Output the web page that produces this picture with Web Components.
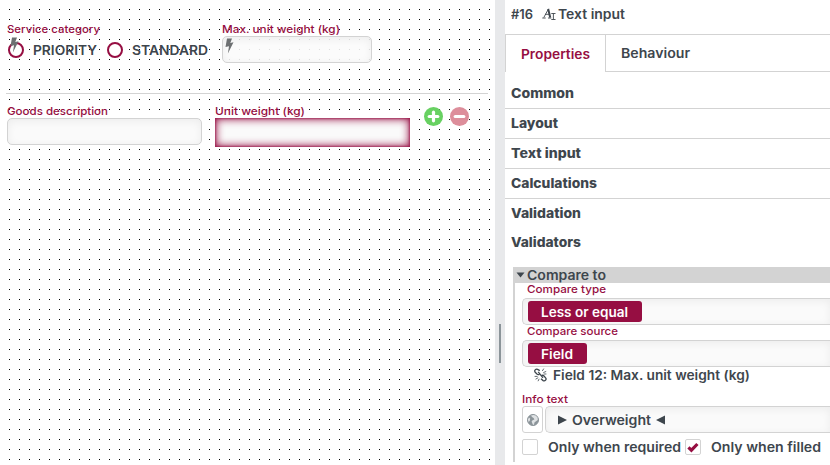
<!DOCTYPE html>
<html lang="en">
<head>
<meta charset="utf-8">
<title>Form designer</title>
<style>
body {
  margin: 0;
  font-family: Inter, "Open Sans", sans-serif;
  color: #3e464d;
}
</style>
</head>
<body>
<form-designer></form-designer>

<script>
const define = (name, html, setup) => {
  const template = document.createElement('template');
  template.innerHTML = html.trim();
  customElements.define(name, class extends HTMLElement {
    constructor() {
      super();
      this.attachShadow({ mode: 'open' });
      this.shadowRoot.appendChild(template.content.cloneNode(true));
    }
    connectedCallback() {
      if (setup) setup(this, this.shadowRoot);
    }
  });
};

// One line of text, widened to the width given in "w"
define('fit-text', `
<style>
:host { display: block; flex: none; white-space: nowrap; font-size: 13px; font-weight: 600; line-height: 16px; }
:host([kind=label]) { font-size: 11px; font-weight: 500; line-height: 14px; color: #960e42; }
:host([kind=title]) { font-weight: 800; font-size: 13px; }
span { display: inline-block; vertical-align: top; transform-origin: 0 0; }
</style>
<span><slot></slot></span>
`, (el, root) => {
  const w = Number(el.getAttribute('w'));
  const span = root.querySelector('span');
  span.style.transform = 'scaleX(' + w / span.getBoundingClientRect().width + ')';
  el.style.width = w + 'px';
});

define('bolt-icon', `
<style>
:host { display: block; width: 9px; height: 16px; }
svg { display: block; }
</style>
<svg width="9" height="16" viewBox="0 0 9 16"><path d="M2 .5h5L5.3 5l3.2-.7L2.9 15.5 4 8.2.5 9z" fill="#6d7072"/></svg>
`);

define('text-box', `
<style>
:host {
  display: flex; align-items: center; box-sizing: border-box; height: 27px; position: relative;
  border: 1px solid #d3d3d3; border-radius: 5px;
  background: #fafafa; box-shadow: inset 0 2px 8px rgba(0,0,0,.06);
}
:host([computed]) { background: rgba(250,250,250,.88); }
:host([open]) { height: 28px; border-right: 0; border-radius: 5px 0 0 5px; }
:host([selected]) {
  height: 29px; border: 0; border-radius: 0;
  box-shadow: inset 0 0 9px 1px #960e42, inset 0 0 2px 1px rgba(150,14,66,.6);
}
</style>
<slot></slot>
`);

define('radio-option', `
<style>
:host { display: flex; align-items: center; gap: 9px; }
i { box-sizing: border-box; width: 16px; height: 16px; border: 2px solid #960e42; border-radius: 50%; background: #fff; }
</style>
<i></i><slot></slot>
`);

define('round-button', `
<style>
:host { display: block; width: 19px; height: 19px; }
svg { display: block; }
circle { fill: #68d162; }
:host([remove]) circle { fill: #dd8e9b; }
:host([remove]) .v { display: none; }
</style>
<svg width="19" height="19" viewBox="0 0 19 19">
  <circle cx="9.5" cy="9.5" r="9.5"/>
  <path d="M5.2 9.5h8.6" stroke="#fff" stroke-width="3.2" stroke-linecap="round"/>
  <path class="v" d="M9.5 5.2v8.6" stroke="#fff" stroke-width="3.2" stroke-linecap="round"/>
</svg>
`);

define('form-canvas', `
<style>
:host {
  display: block; box-sizing: border-box; width: 495px; height: 465px; padding: 22px 6px 0;
  background: #fff;
  position: relative;
}
.grid { position: absolute; inset: 0 5px 0 0; }
.row { display: flex; position: relative; padding-left: 1px; }
.first { height: 71px; border-bottom: 1px solid #d3d3d3; width: 481px; }
.service { width: 215px; }
.radios { display: flex; padding: 6px 0 0 1px; }
.radios radio-option + radio-option { margin-left: 10px; }
.mark { position: absolute; left: 4px; top: 15px; }
.second { padding-top: 10px; }
.goods { width: 208px; }
.max text-box { width: 150px; }
.goods text-box { width: 195px; }
.unit text-box { width: 195px; }
.buttons { display: flex; gap: 7px; margin: 3px 0 0 14px; }
</style>
<svg class="grid" width="490" height="465">
  <pattern id="dots" width="10" height="10" patternUnits="userSpaceOnUse"><rect x="9" y="9" width="1" height="1" fill="#000"/></pattern>
  <rect width="490" height="465" fill="url(#dots)"/>
</svg>
<div class="row first">
  <div class="service">
    <fit-text kind="label" w="93">Service category</fit-text>
    <div class="radios">
      <radio-option><fit-text w="64">PRIORITY</fit-text></radio-option>
      <radio-option><fit-text w="76">STANDARD</fit-text></radio-option>
    </div>
    <bolt-icon class="mark"></bolt-icon>
  </div>
  <div class="max">
    <fit-text kind="label" w="118">Max. unit weight (kg)</fit-text>
    <text-box computed><bolt-icon style="margin:-8px 0 0 2px"></bolt-icon></text-box>
  </div>
</div>
<div class="row second">
  <div class="goods">
    <fit-text kind="label" w="101">Goods description</fit-text>
    <text-box></text-box>
  </div>
  <div class="unit">
    <fit-text kind="label" w="90">Unit weight (kg)</fit-text>
    <text-box selected></text-box>
  </div>
  <div class="buttons">
    <round-button></round-button>
    <round-button remove></round-button>
  </div>
</div>
`);

define('split-bar', `
<style>
:host { display: flex; align-items: center; width: 10px; height: 465px; background: #e8e9eb; }
i { width: 2px; height: 39px; margin: 221px 0 0 4px; background: #8b9499; }
</style>
<i></i>
`);

define('tag-chip', `
<style>
:host { display: flex; align-items: center; height: 21px; margin: 0 0 1px 5px; padding: 1px 14px 0 13px; box-sizing: border-box; border-radius: 3px; background: #960e42; color: #fff; }
</style>
<slot></slot>
`);

define('check-option', `
<style>
:host { display: flex; align-items: center; gap: 10px; }
i { display: block; box-sizing: border-box; width: 16px; height: 16px; border: 1px solid #d3d3d3; border-radius: 2px; background: #fff; }
svg { display: none; }
:host([checked]) svg { display: block; }
</style>
<i><svg width="14" height="14" viewBox="0 0 14 14"><path d="M2.4 7.4l3 2.8 6-6.2" fill="none" stroke="#960e42" stroke-width="3.2"/></svg></i>
<slot></slot>
`);

define('compare-section', `
<style>
:host { display: block; box-sizing: border-box; height: 195px; margin: 13px 0 0 8px; border-left: 2px solid #d3d3d3; }
header { display: flex; align-items: center; height: 16px; gap: 2px; padding-left: 2px; margin-left: -1px; background: #d3d3d3; }
.body { padding-left: 7px; }
.label { margin-left: 5px; }
.source { display: flex; align-items: center; gap: 6px; height: 16px; padding-left: 12px; }
.info { display: flex; gap: 2px; }
.globe { box-sizing: border-box; width: 21px; height: 27px; display: flex; align-items: center; justify-content: center; border: 1px solid #d3d3d3; border-radius: 3px; }
.info text-box { flex: 1; height: 27px; }
.value { display: flex; align-items: center; gap: 5px; margin-left: 12px; }
.checks { display: flex; gap: 4px; margin-top: 6px; }
svg { display: block; flex: none; }
</style>
<header>
  <svg width="9" height="6"><path d="M.5 .5h8l-4 5z" fill="#3e464d"/></svg>
  <fit-text w="79">Compare to</fit-text>
</header>
<div class="body">
  <fit-text class="label" kind="label" w="79" style="margin-top:-1px">Compare type</fit-text>
  <text-box open style="margin-top:2px;height:27px"><tag-chip><fit-text w="87">Less or equal</fit-text></tag-chip></text-box>
  <fit-text class="label" kind="label" w="91" style="margin-top:-1px">Compare source</fit-text>
  <text-box open style="margin-top:2px;height:27px"><tag-chip><fit-text w="32">Field</fit-text></tag-chip></text-box>
  <div class="source">
    <svg width="13" height="14" viewBox="0 0 13 14" fill="none" stroke="#3e464d" stroke-width="1.3">
      <path d="M5.8 2.6L3.6 1.4Q2.2.8 1.2 1.9T1.2 4.3L3.2 6.3Q4.4 7 5.6 6.2M7.4 7.6Q8.8 6.8 10 8l1.6 1.8q1 1.2 0 2.3t-2.5.5L7 10.8"/>
      <path d="M4.2 3.9l4.8 6"/>
      <path d="M8.3 3L9.8.6M9.3 4.6l2.9-1.2M9.6 6h2.8M3.6 8.4H.6M4.2 9.7L1.6 11.2M5.2 10.8l-1.2 2.4" stroke-width=".8"/>
    </svg>
    <fit-text w="197">Field 12: Max. unit weight (kg)</fit-text>
  </div>
  <fit-text kind="label" w="46" style="margin-top:9px">Info text</fit-text>
  <div class="info">
    <div class="globe">
      <svg width="12" height="12" viewBox="0 0 12 12"><circle cx="6" cy="6" r="5.5" fill="#8b9499" stroke="#8b9499"/><path d="M5.6.9L8 1.4 7 3 5.4 4 4.6 5.4 6.4 6.2 7.4 7.6 6.2 10.6 5 11 4.6 8.6 3 7.2 1.2 6 1.4 3.6 3.4 1.6zM10 3.4L11.2 5.6 10.4 8 9.2 6.8 8.8 4.6z" fill="#dfe2e4" transform="matrix(-1 0 0 1 12 0)"/></svg>
    </div>
    <text-box open>
      <div class="value">
        <svg width="9" height="10"><path d="M0 .5l9 4.5-9 4.5z" fill="#3e464d"/></svg>
        <fit-text w="79">Overweight</fit-text>
        <svg width="9" height="10"><path d="M9 .5L0 5l9 4.5z" fill="#3e464d"/></svg>
      </div>
    </text-box>
  </div>
  <div class="checks">
    <check-option><fit-text w="133">Only when required</fit-text></check-option>
    <check-option checked><fit-text w="110">Only when filled</fit-text></check-option>
  </div>
</div>
`);

define('property-panel', `
<style>
:host { display: block; width: 325px; height: 465px; overflow: hidden; background: #fff; }
.head { display: flex; align-items: center; height: 34px; box-sizing: border-box; padding: 0 0 7px 6px; }
.head svg { margin: 0 2px 0 9px; }
.tabs { display: flex; height: 38px; box-sizing: border-box; border-top: 1px solid #d3d3d3; }
.tab { display: flex; align-items: center; box-sizing: border-box; padding-left: 15px; }
.active { width: 101px; border: solid #d3d3d3; border-width: 0 1px; color: #960e42; }
.rest { flex: 1; border-bottom: 1px solid #d3d3d3; }
.groups { padding-top: 7px; }
.group { box-sizing: border-box; height: 30px; padding: 6px 0 0 6px; border-bottom: 1px solid #d3d3d3; }
.group.plain { border: 0; }
.group.last { height: 25px; padding-top: 5px; }
</style>
<div class="head">
  <fit-text w="22">#16</fit-text>
  <svg width="14" height="14" viewBox="0 0 14 14" fill="none" stroke="#3e464d">
    <path d="M1.8 10.5L6.5 1.8" stroke-width=".9"/><path d="M6.2 2l2 8.5" stroke-width="2"/><path d="M3 7.3h4.5M.3 11h3.4M6 11h3.3" stroke-width=".9"/>
    <path d="M9.3 6.5h4.2M9.3 12.5h4.2M11.4 6.5v6" stroke-width=".9"/>
  </svg>
  <fit-text w="67">Text input</fit-text>
</div>
<div class="tabs">
  <div class="tab active"><fit-text w="69">Properties</fit-text></div>
  <div class="tab rest"><fit-text w="69">Behaviour</fit-text></div>
</div>
<div class="groups">
  <div class="group"><fit-text kind="title" w="63">Common</fit-text></div>
  <div class="group"><fit-text kind="title" w="47">Layout</fit-text></div>
  <div class="group"><fit-text kind="title" w="70">Text input</fit-text></div>
  <div class="group"><fit-text kind="title" w="86">Calculations</fit-text></div>
  <div class="group plain"><fit-text kind="title" w="70">Validation</fit-text></div>
  <div class="group plain last"><fit-text kind="title" w="70">Validators</fit-text></div>
</div>
<compare-section></compare-section>
`);

define('form-designer', `
<style>
:host { display: flex; width: 830px; height: 465px; overflow: hidden; }
</style>
<form-canvas></form-canvas>
<split-bar></split-bar>
<property-panel></property-panel>
`);
</script>
</body>
</html>
